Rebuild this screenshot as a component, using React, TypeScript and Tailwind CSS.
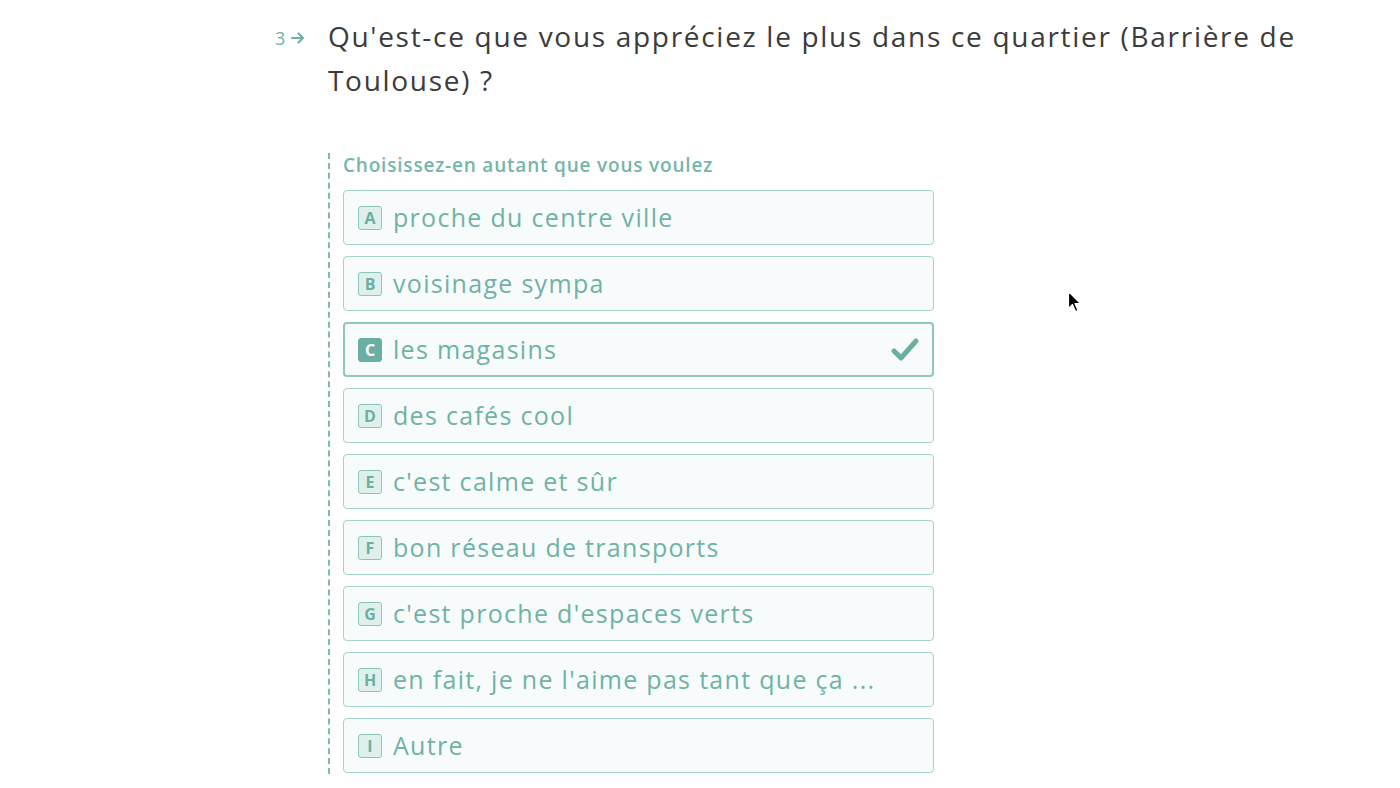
const options = [
  { key: "A", label: "proche du centre ville" },
  { key: "B", label: "voisinage sympa" },
  { key: "C", label: "les magasins", selected: true },
  { key: "D", label: "des cafés cool" },
  { key: "E", label: "c'est calme et sûr" },
  { key: "F", label: "bon réseau de transports" },
  { key: "G", label: "c'est proche d'espaces verts" },
  { key: "H", label: "en fait, je ne l'aime pas tant que ça ..." },
  { key: "I", label: "Autre" },
];

const App = () => {
  return (
    <div
      className="relative w-[1400px] h-[788px] bg-white overflow-hidden"
      style={{ fontFamily: "'Open Sans', 'Noto Sans', sans-serif" }}
    >
      <div className="flex pl-[275px] pt-[14px]">
        {/* Numéro de question */}
        <div className="flex items-center gap-[6px] w-[53px] h-[48px] text-[#6fb2a6]">
          <span className="text-[18px]">3</span>
          <svg width="14" height="12" viewBox="0 0 14 12" fill="none">
            <path d="M1 6h11M7.5 1.5 12 6l-4.5 4.5" stroke="#6fb2a6" strokeWidth="2.2" strokeLinecap="round" strokeLinejoin="round" />
          </svg>
        </div>

        <div className="flex flex-col">
          <h1 className="w-[990px] text-[28px] leading-[44px] text-[#3b3b3b] tracking-[1.7px]">
            Qu'est-ce que vous appréciez le plus dans ce quartier (Barrière de Toulouse) ?
          </h1>

          {/* Liste des choix */}
          <div className="mt-[51px] border-l-2 border-dashed border-[#7dbcb1] pl-[13px] pb-[1px] w-[607px]">
            <div className="text-[19px] font-semibold text-[#74b6aa] leading-[24px] mb-[13px] tracking-[0.8px]">
              Choisissez-en autant que vous voulez
            </div>
            <div className="flex flex-col gap-[11px]">
              {options.map((opt) => (
                <div
                  key={opt.key}
                  className={`flex items-center h-[55px] w-[591px] rounded-[4px] bg-[#f8fbfb] px-[14px] ${
                    opt.selected
                      ? "border-[2px] border-[#8ec7bd] pl-[13px]"
                      : "border border-[#a5d3cb]"
                  }`}
                >
                  <span
                    className={`flex items-center justify-center w-[24px] h-[24px] rounded-[3px] text-[16px] leading-none font-bold mr-[11px] ${
                      opt.selected
                        ? "bg-[#6bafa3] text-white border border-[#6bafa3]"
                        : "bg-[#dff0ec] text-[#6bafa3] border border-[#8cc5bb]"
                    }`}
                  >
                    {opt.key}
                  </span>
                  <span className="flex-1 text-[25px] text-[#6fb2a6] tracking-[1.3px] whitespace-nowrap">
                    {opt.label}
                  </span>
                  {opt.selected && (
                    <svg width="28" height="26" viewBox="0 0 28 26" className="mr-[-1px]">
                      <path d="M3 14l7 7L25 4" fill="none" stroke="#6bafa3" strokeWidth="5" strokeLinecap="round" strokeLinejoin="round" />
                    </svg>
                  )}
                </div>
              ))}
            </div>
          </div>
        </div>
      </div>

      {/* Curseur */}
      <svg className="absolute left-[1067px] top-[290px]" width="16" height="24" viewBox="0 0 16 24">
        <path d="M1.5 1.5v17l4-4 3 7 2.5-1-3-7h5.5z" fill="#000" stroke="#fff" strokeWidth="1.2" strokeLinejoin="round" />
      </svg>
    </div>
  );
};

export default App;
